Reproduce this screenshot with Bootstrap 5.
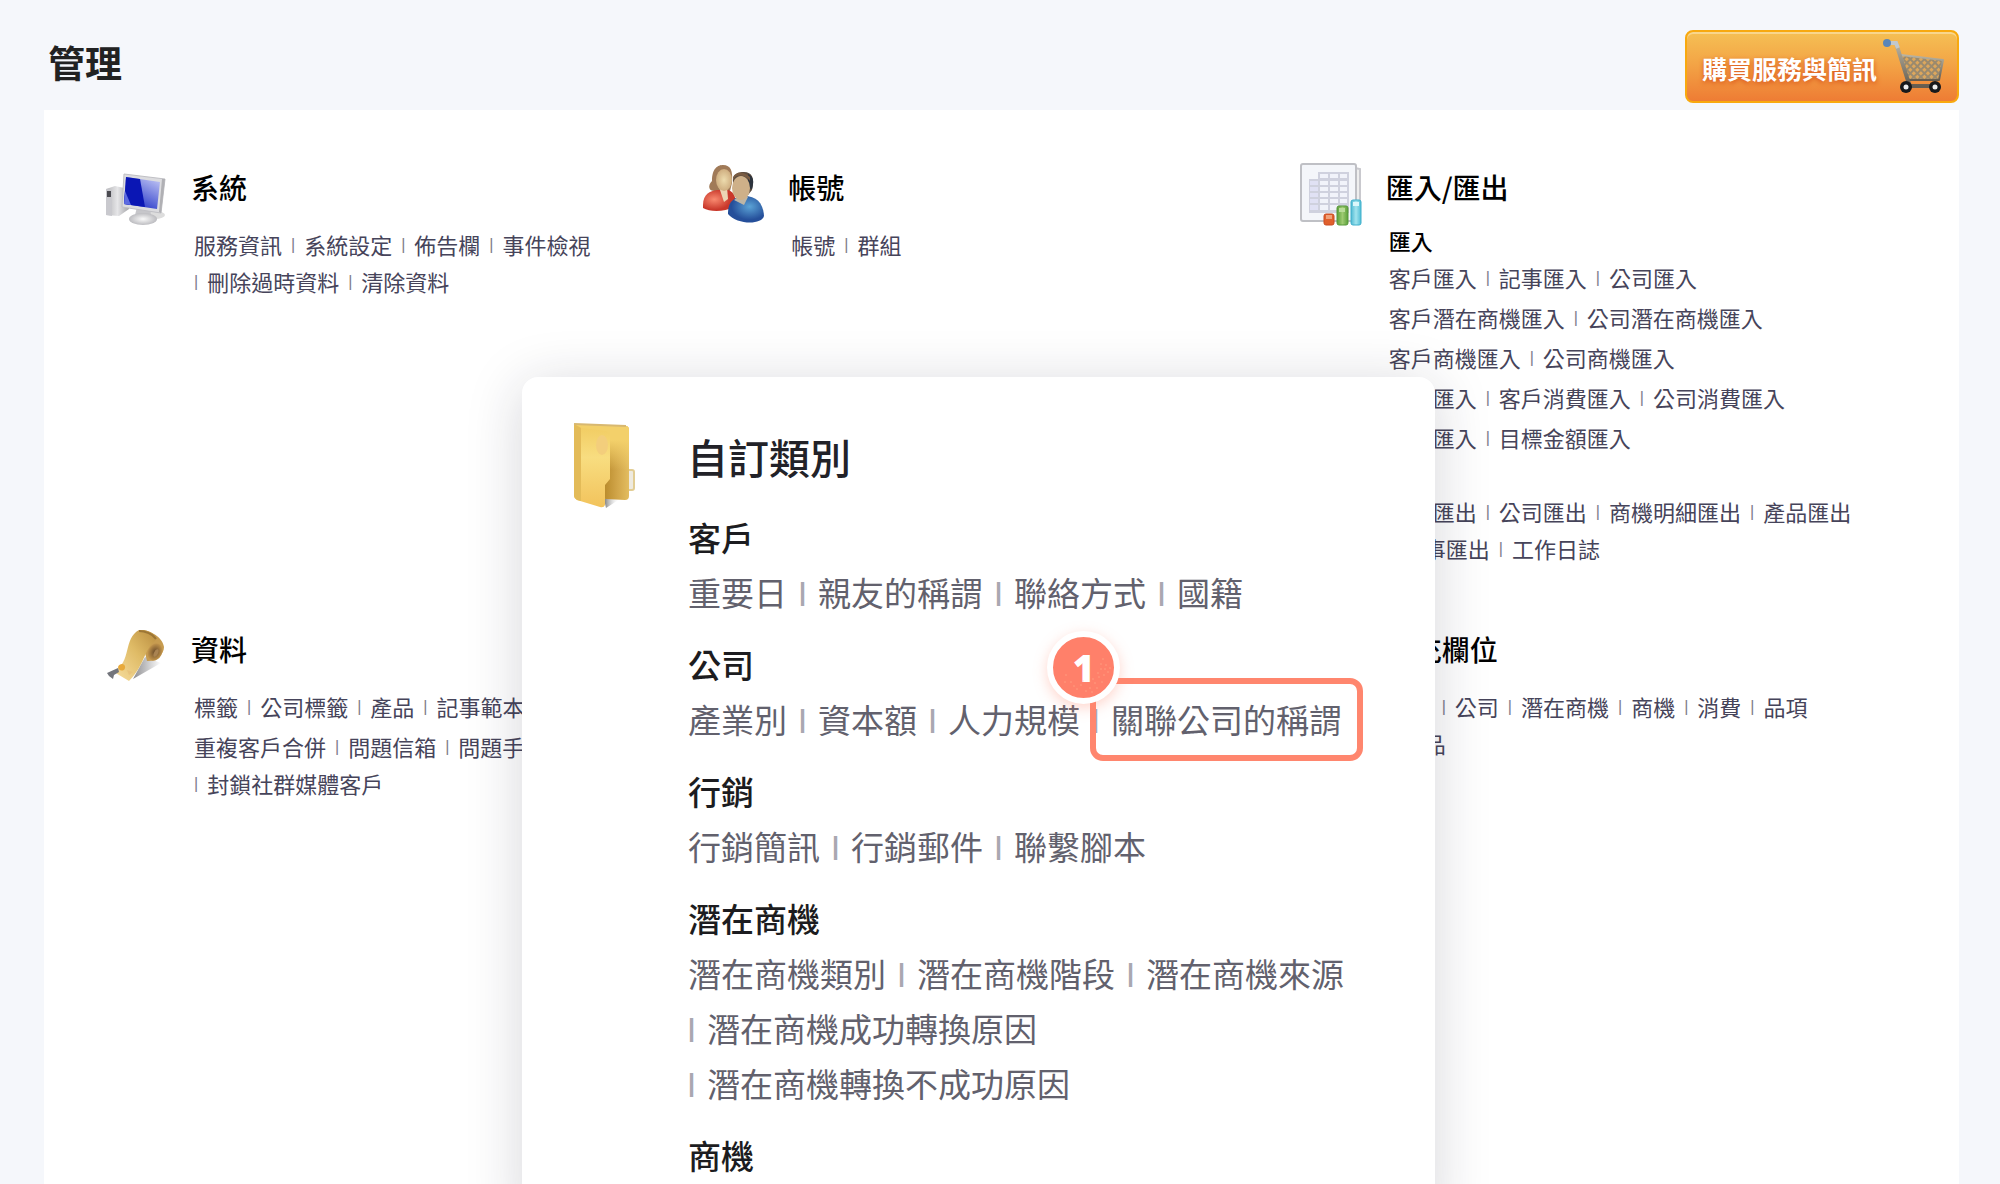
<!DOCTYPE html>
<html lang="zh-Hant">
<head>
<meta charset="utf-8">
<meta name="viewport" content="width=device-width, initial-scale=1">
<title>管理</title>
<link href="https://cdn.jsdelivr.net/npm/bootstrap@5.3.0/dist/css/bootstrap.min.css" rel="stylesheet">
<style>
  body { font-family: "Noto Sans CJK TC", "Noto Sans", sans-serif; background: #f5f7fb; color: #000; }
  a { text-decoration: none; color: inherit; }
  .page { height: 100vh; overflow: hidden; padding: 0 41px 0 44px; }
  .topbar { padding: 30px 0 7px 4px; }
  .page-title { font-size: 37px; line-height: 64px; font-weight: 700; color: #222; }
  .btn-buy { width: 274px; height: 73px; padding: 0 11px 0 15px; border: 2px solid #f8a90f; border-radius: 8px;
    background: linear-gradient(#f5c054, #f3a546 45%, #ee7c34); color: #fff; font-size: 25px; font-weight: 700;
    box-shadow: inset 0 2px 0 #f9d68c; text-shadow: 0 2px 5px #d9541a; }
  .panel { padding: 53px 62px 0 61px; }
  .section-row { margin-bottom: 58px; }
  .ico-cell { width: 86px; }
  .section-title { font-size: 28px; line-height: 48px; font-weight: 500; }
  .links { font-size: 22px; line-height: 37px; color: #46445a; padding-left: 3px; }
  .links-spaced { padding-top: 15px; }
  .links-titled { padding-top: 11px; }
  .line { display: flex; gap: 9px; white-space: nowrap; }
  .line-break { margin-top: 3px; }
  .sub { font-weight: 500; color: #000; }
  .sep { font-family: "Liberation Sans", sans-serif; font-size: 16px; color: #7d7c8a; }
  .popup { left: 522px; top: 377px; bottom: -40px; width: 913px; border-radius: 16px; padding: 45px 40px 0 50px;
    box-shadow: 0 8px 56px rgba(30, 30, 50, .18); }
  .popup-ico { width: 115px; }
  .popup-title { font-size: 41px; line-height: 60px; font-weight: 500; color: #222228; padding-top: 4px; margin-bottom: 24px; }
  .popup-links { font-size: 33px; line-height: 55px; color: #62616d; padding-left: 1px; }
  .popup-links .line { gap: 12px; }
  .popup-links .sep { font-size: 25px; font-weight: 700; color: #a9a8b0; }
  .popup-links .sub { color: #1c1c20; }
  .group { margin-bottom: 17px; }
  .spotlight::after { content: ""; position: absolute; inset: -14px -21px; border: 6px solid #ff866e; border-radius: 13px; }
  .step { left: -64px; top: -61px; width: 73px; height: 73px; border: 6px solid #fff; border-radius: 50%; background: #ff806a;
    color: #fff; font: 800 37px/1 "Open Sans", sans-serif; z-index: 2; box-shadow: 0 4px 14px rgba(255, 134, 110, .35); }
  .step svg { inset: 0; }
</style>
<script src="https://cdn.jsdelivr.net/npm/bootstrap@5.3.0/dist/js/bootstrap.bundle.min.js"></script>
</head>
<body>
<div class="page position-relative d-flex flex-column">
  <header class="topbar d-flex justify-content-between align-items-start">
    <h1 class="page-title m-0">管理</h1>
    <button type="button" class="btn-buy d-flex align-items-center justify-content-between text-nowrap">
      <span class="pt-1">購買服務與簡訊</span>
      <svg width="64" height="58" viewBox="0 0 64 58" aria-hidden="true">
        <defs>
          <linearGradient id="cartMetal" x1="0" y1="0" x2="0" y2="1"><stop offset="0" stop-color="#b9b4a4"/><stop offset="1" stop-color="#665d50"/></linearGradient>
          <pattern id="cartMesh" width="5" height="5" patternUnits="userSpaceOnUse" patternTransform="rotate(45)"><rect width="5" height="5" fill="#9a8a6e"/><rect x="1" y="1" width="3" height="3" fill="#dda75c"/></pattern>
        </defs>
        <path d="M19 17L61 22L57 42H26Z" fill="url(#cartMesh)" stroke="url(#cartMetal)" stroke-width="2" stroke-linejoin="round"/>
        <path d="M7 5H14L26 43L28 48H54" fill="none" stroke="url(#cartMetal)" stroke-width="4" stroke-linejoin="round"/>
        <path d="M5 5H14L16 10" fill="none" stroke="#c2c8cc" stroke-width="4"/>
        <circle cx="5" cy="5" r="4" fill="#5b86b8"/>
        <circle cx="24" cy="49" r="6" fill="#17191c"/><circle cx="24" cy="49" r="2.500" fill="#eee"/>
        <circle cx="53" cy="49" r="6" fill="#17191c"/><circle cx="53" cy="49" r="2.500" fill="#eee"/>
      </svg>
    </button>
  </header>

  <main class="panel bg-white flex-grow-1">
    <div class="section-row row g-0">
      <section class="col-4 d-flex">
        <div class="ico-cell flex-shrink-0">
          <svg width="64" height="64" viewBox="0 0 64 64" aria-hidden="true">
            <defs>
              <linearGradient id="caseG" x1="0" x2="1"><stop offset="0" stop-color="#b5b5b8"/><stop offset=".5" stop-color="#e6e6e8"/><stop offset="1" stop-color="#a4a4a8"/></linearGradient>
              <linearGradient id="screenG" x1="1" y1="0" x2=".4" y2="1"><stop offset="0" stop-color="#c9cdf7"/><stop offset="1" stop-color="#2536c8"/></linearGradient>
              <radialGradient id="footG"><stop offset="0" stop-color="#fafafa"/><stop offset="1" stop-color="#bcbcc0"/></radialGradient>
            </defs>
            <ellipse cx="50" cy="52" rx="10" ry="4" fill="#ddd"/>
            <path d="M1 26L10 23L24 26V46L14 53L1 52Z" fill="url(#caseG)"/>
            <path d="M1 26L7 27V53L1 52Z" fill="#c9c9ce"/><rect x="2" y="28" width="4" height="6" fill="#4a4a50"/>
            <path d="M32 44H45L46 52H30Z" fill="#c6c6ca"/>
            <ellipse cx="38" cy="56" rx="14" ry="6" fill="url(#footG)"/>
            <path d="M19 11L60 16L56 50L17 44Z" fill="#dcdcdf" stroke="#c0c0c5"/>
            <path d="M57 16L60 16L56 50L54 49Z" fill="#b0b0b4"/>
            <path d="M21 14L55 19L52 46L19 41Z" fill="url(#screenG)"/>
            <path d="M21 14L35 16L40 44L19 41Z" fill="#0a16b4"/>
            <path d="M20 28L26 42L19 41Z" fill="#5d6be0"/>
          </svg>
        </div>
        <div>
          <h2 class="section-title m-0">系統</h2>
          <div class="links links-spaced">
            <div class="line"><a href="#">服務資訊</a><span class="sep">|</span><a href="#">系統設定</a><span class="sep">|</span><a href="#">佈告欄</a><span class="sep">|</span><a href="#">事件檢視</a></div>
            <div class="line"><span class="sep">|</span><a href="#">刪除過時資料</a><span class="sep">|</span><a href="#">清除資料</a></div>
          </div>
        </div>
      </section>

      <section class="col-4 d-flex">
        <div class="ico-cell flex-shrink-0">
          <svg width="64" height="64" viewBox="0 0 64 64" aria-hidden="true">
            <defs>
              <radialGradient id="redG" cx=".35" cy=".45"><stop offset="0" stop-color="#f98a70"/><stop offset="1" stop-color="#c9382b"/></radialGradient>
              <radialGradient id="blueG" cx=".6" cy=".4"><stop offset="0" stop-color="#5ba3d6"/><stop offset="1" stop-color="#254f9a"/></radialGradient>
              <radialGradient id="faceG"><stop offset="0" stop-color="#eddcae"/><stop offset="1" stop-color="#cfae80"/></radialGradient>
            </defs>
            <path d="M10 18C10 5 16 2 21 2C29 2 31 8 30 20L28 28H14C7 29 5 23 10 18Z" fill="#a07a58"/>
            <path d="M1 42C1 31 8 28 15 27H26C33 29 35 36 32 44C22 49 8 49 1 45Z" fill="url(#redG)"/>
            <path d="M17 24H25L26 36L22 39Z" fill="#ecd5b4"/>
            <ellipse cx="22" cy="17" rx="8" ry="11" fill="url(#faceG)"/>
            <path d="M26 49C26 38 34 33 42 33C54 33 61 39 62 53C60 62 35 62 26 51Z" fill="url(#blueG)"/>
            <path d="M32 37L42 42L46 34L40 31Z" fill="#bdb6a6"/>
            <path d="M31 20C30 11 36 9 42 9C50 9 53 15 50 27L46 32L31 24Z" fill="#5c4c3f"/>
            <path d="M46 11C52 14 52 18 50 26L46 25Z" fill="#2c333d"/>
            <ellipse cx="39" cy="25" rx="9" ry="12" fill="#ceb089"/>
            <path d="M31 17C33 11 43 11 48 18V14C42 8 34 8 31 14Z" fill="#795b42"/>
          </svg>
        </div>
        <div>
          <h2 class="section-title m-0">帳號</h2>
          <div class="links links-spaced">
            <div class="line"><a href="#">帳號</a><span class="sep">|</span><a href="#">群組</a></div>
          </div>
        </div>
      </section>

      <section class="col-4 d-flex">
        <div class="ico-cell flex-shrink-0">
          <svg width="64" height="64" viewBox="0 0 64 64" aria-hidden="true">
            <defs>
              <linearGradient id="cyanG"><stop offset="0" stop-color="#4fb9d3"/><stop offset=".5" stop-color="#a2e4ee"/><stop offset="1" stop-color="#52bdd6"/></linearGradient>
              <linearGradient id="greenG"><stop offset="0" stop-color="#5b9f38"/><stop offset=".5" stop-color="#9ecb72"/><stop offset="1" stop-color="#5b9f38"/></linearGradient>
            </defs>
            <path d="M55 5L60 6V58H10" fill="#eee" stroke="#c9c9ce" stroke-width="2"/>
            <rect x="1" y="1" width="55" height="57" rx="2" fill="#f4f6fa" stroke="#bfc0c5" stroke-width="2"/>
            <path d="M9 16H18V9H49V50H9Z" fill="#cfd1de"/>
            <g fill="#f1f3fa">
              <path d="M20 11h8v4h-8zM30 11h8v4h-8zM40 11h7v4h-7z"/>
              <path d="M20 18h8v4h-8zM30 18h8v4h-8zM40 18h7v4h-7zM20 24h8v4h-8zM30 24h8v4h-8zM40 24h7v4h-7zM20 30h8v4h-8zM30 30h8v4h-8zM40 30h7v4h-7zM20 36h8v4h-8zM30 36h8v4h-8zM40 36h7v4h-7zM20 42h8v5h-8zM30 42h8v5h-8z"/>
            </g>
            <path d="M10 18h8v4h-8zM10 24h8v4h-8zM10 30h8v4h-8zM10 36h8v4h-8zM10 42h8v5h-8z" fill="#e0e1f4"/>
            <rect x="24" y="51" width="10" height="11" rx="2" fill="#e0602c" stroke="#cb4b20"/><rect x="26" y="52" width="6" height="4" fill="#f0a07a"/>
            <rect x="37" y="43" width="11" height="19" rx="2" fill="url(#greenG)" stroke="#57993a"/><rect x="39" y="45" width="6" height="4" fill="#b9dc98"/>
            <rect x="51" y="37" width="10" height="25" rx="2" fill="url(#cyanG)" stroke="#3fb0cc"/><rect x="53" y="39" width="6" height="4" fill="#dbf7fb"/>
          </svg>
        </div>
        <div>
          <h2 class="section-title m-0">匯入/匯出</h2>
          <div class="links links-titled">
            <div class="sub">匯入</div>
            <div class="line"><a href="#">客戶匯入</a><span class="sep">|</span><a href="#">記事匯入</a><span class="sep">|</span><a href="#">公司匯入</a></div>
            <div class="line line-break"><a href="#">客戶潛在商機匯入</a><span class="sep">|</span><a href="#">公司潛在商機匯入</a></div>
            <div class="line line-break"><a href="#">客戶商機匯入</a><span class="sep">|</span><a href="#">公司商機匯入</a></div>
            <div class="line line-break"><a href="#">產品匯入</a><span class="sep">|</span><a href="#">客戶消費匯入</a><span class="sep">|</span><a href="#">公司消費匯入</a></div>
            <div class="line line-break"><a href="#">標籤匯入</a><span class="sep">|</span><a href="#">目標金額匯入</a></div>
            <div class="sub">匯出</div>
            <div class="line"><a href="#">客戶匯出</a><span class="sep">|</span><a href="#">公司匯出</a><span class="sep">|</span><a href="#">商機明細匯出</a><span class="sep">|</span><a href="#">產品匯出</a></div>
            <div class="line"><span class="sep">|</span><a href="#">記事匯出</a><span class="sep">|</span><a href="#">工作日誌</a></div>
          </div>
        </div>
      </section>
    </div>

    <div class="row g-0">
      <section class="col-4 d-flex">
        <div class="ico-cell flex-shrink-0">
          <svg width="64" height="64" viewBox="0 0 64 64" aria-hidden="true">
            <defs>
              <linearGradient id="paperG" x1="1" y1="0" x2="0" y2="1"><stop offset="0" stop-color="#b98c3f"/><stop offset=".45" stop-color="#dfbb66"/><stop offset="1" stop-color="#f8dfa0"/></linearGradient>
              <radialGradient id="rollG"><stop offset="0" stop-color="#6a4a2a"/><stop offset="1" stop-color="#c2954c"/></radialGradient>
              <linearGradient id="shadeG" x1="0" x2="1"><stop offset="0" stop-color="#8d8d90"/><stop offset="1" stop-color="#fff"/></linearGradient>
            </defs>
            <path d="M28 54L40 32L56 38Z" fill="url(#shadeG)"/>
            <path d="M34 5C44 4 58 12 59 22C59 30 50 37 42 36L38 20Z" fill="#c79c50"/>
            <ellipse cx="50" cy="27" rx="7" ry="9" transform="rotate(25 50 27)" fill="url(#rollG)"/>
            <ellipse cx="51" cy="28" rx="2" ry="4" transform="rotate(25 51 28)" fill="#a98352"/>
            <path d="M34 5C44 4 54 11 50 16C39 24 40 40 24 56L9 47C27 36 18 14 34 5Z" fill="url(#paperG)"/>
            <path d="M34 6C40 6 48 9 51 14" fill="none" stroke="#9c7636" stroke-width="2"/>
            <path d="M13 42C15 37 21 39 20 43C19 47 13 46 13 42Z" fill="#e8a93a"/>
            <path d="M2 48L13 43L14 47L9 50L8 54L4 51Z" fill="#73757c"/>
            <path d="M22 45L28 47L24 50Z" fill="#e8c37c"/>
          </svg>
        </div>
        <div>
          <h2 class="section-title m-0">資料</h2>
          <div class="links links-spaced">
            <div class="line"><a href="#">標籤</a><span class="sep">|</span><a href="#">公司標籤</a><span class="sep">|</span><a href="#">產品</a><span class="sep">|</span><a href="#">記事範本</a></div>
            <div class="line line-break"><a href="#">重複客戶合併</a><span class="sep">|</span><a href="#">問題信箱</a><span class="sep">|</span><a href="#">問題手機</a></div>
            <div class="line"><span class="sep">|</span><a href="#">封鎖社群媒體客戶</a></div>
          </div>
        </div>
      </section>
      <section class="col-4 offset-4 d-flex">
        <div class="ico-cell flex-shrink-0"></div>
        <div>
          <h2 class="section-title m-0">擴充欄位</h2>
          <div class="links links-spaced">
            <div class="line"><a href="#">客戶</a><span class="sep">|</span><a href="#">公司</a><span class="sep">|</span><a href="#">潛在商機</a><span class="sep">|</span><a href="#">商機</a><span class="sep">|</span><a href="#">消費</a><span class="sep">|</span><a href="#">品項</a></div>
            <div class="line"><span class="sep">|</span><a href="#">產品</a></div>
          </div>
        </div>
      </section>
    </div>
  </main>

  <section class="popup position-absolute bg-white d-flex">
    <div class="popup-ico flex-shrink-0">
      <svg width="66" height="90" viewBox="0 0 66 90" aria-hidden="true">
        <defs>
          <linearGradient id="backG" x1=".55" x2="1"><stop offset="0" stop-color="#b98b2c"/><stop offset=".5" stop-color="#d0a448"/><stop offset="1" stop-color="#e3bd60"/></linearGradient>
          <linearGradient id="backTop" x1="0" y1="0" x2="0" y2="1"><stop offset="0" stop-color="#f3d06a"/><stop offset=".35" stop-color="#f3d06a"/><stop offset="1" stop-color="#f3d06a" stop-opacity="0"/></linearGradient>
          <linearGradient id="frontG" x1="0" y1="0" x2="0" y2="1"><stop offset="0" stop-color="#f1cb60"/><stop offset=".4" stop-color="#f8dd80"/><stop offset="1" stop-color="#f2c35c"/></linearGradient>
          <linearGradient id="floorG"><stop offset="0" stop-color="#777"/><stop offset="1" stop-color="#fff" stop-opacity="0"/></linearGradient>
        </defs>
        <path d="M32 77L48 77L34 86Z" fill="url(#floorG)"/>
        <rect x="55" y="48" width="7" height="20" rx="2" fill="#eeeae0" stroke="#e2cd94" stroke-width="2"/>
        <path d="M2 2L54 4Q57 4 57 8V74Q57 78 53 78L34 77L2 74Z" fill="url(#backG)"/>
        <path d="M2 2L54 4Q57 4 57 8V48H2Z" fill="url(#backTop)"/>
        <path d="M2 2L10 6L34 9Q38 10 38 14V57L33 63V83Q32 86 28 85L5 78Q2 76 2 74Z" fill="url(#frontG)"/>
        <path d="M2 2L9 6V79L5 78Q2 76 2 74Z" fill="#e3bb58"/>
        <path d="M2 2L54 4" stroke="#d8b870" stroke-width="2"/>
        <ellipse cx="30" cy="23" rx="6" ry="10" fill="#f3ce7c"/>
      </svg>
    </div>
    <div>
      <h2 class="popup-title">自訂類別</h2>
      <div class="popup-links">
        <div class="group">
          <div class="sub">客戶</div>
          <div class="line"><a href="#">重要日</a><span class="sep">|</span><a href="#">親友的稱謂</a><span class="sep">|</span><a href="#">聯絡方式</a><span class="sep">|</span><a href="#">國籍</a></div>
        </div>
        <div class="group">
          <div class="sub">公司</div>
          <div class="line"><a href="#">產業別</a><span class="sep">|</span><a href="#">資本額</a><span class="sep">|</span><a href="#">人力規模</a><span class="sep">|</span>
            <div class="spotlight position-relative"><a href="#">關聯公司的稱謂</a>
              <span class="step position-absolute d-flex align-items-center justify-content-center">1<svg class="position-absolute" width="61" height="61" viewBox="0 0 61 61" fill="none" stroke="#ffc09c" stroke-linecap="round" aria-hidden="true"><path d="M50 22v0M53 28v0M48 32v0M55 35v0M51 38v0M46 40v0M42 46v0M49 45v0M37 51v0M33 54v0M44 51v0M24 52v0M28 48v0M18 45v0M13 38v0M40 42v0M52 32v0M45 36v0M21 49v0M39 55v0M48 27v0M57 31v0M30 44v0M12 45v0" stroke-width="1"/></svg></span>
            </div>
          </div>
        </div>
        <div class="group">
          <div class="sub">行銷</div>
          <div class="line"><a href="#">行銷簡訊</a><span class="sep">|</span><a href="#">行銷郵件</a><span class="sep">|</span><a href="#">聯繫腳本</a></div>
        </div>
        <div class="group">
          <div class="sub">潛在商機</div>
          <div class="line"><a href="#">潛在商機類別</a><span class="sep">|</span><a href="#">潛在商機階段</a><span class="sep">|</span><a href="#">潛在商機來源</a></div>
          <div class="line"><span class="sep">|</span><a href="#">潛在商機成功轉換原因</a></div>
          <div class="line"><span class="sep">|</span><a href="#">潛在商機轉換不成功原因</a></div>
        </div>
        <div class="group">
          <div class="sub">商機</div>
        </div>
      </div>
    </div>
  </section>
</div>
</body>
</html>
